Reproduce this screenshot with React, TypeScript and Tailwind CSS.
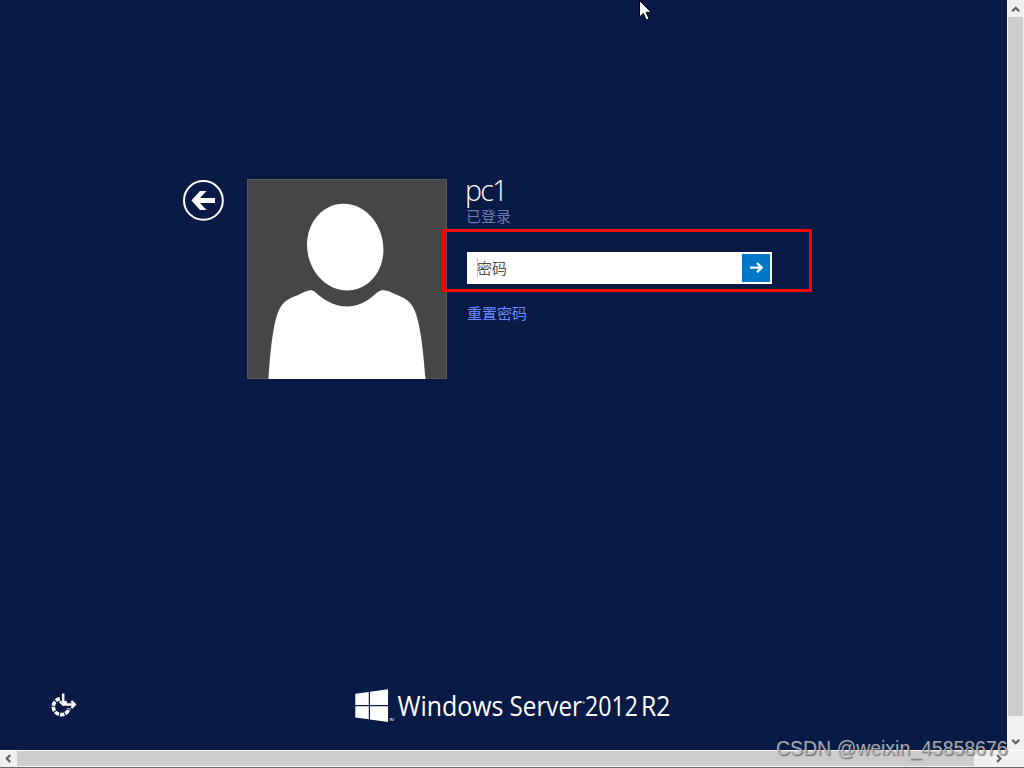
import React from 'react';

type IconProps = Readonly<{
	className?: string;
}>;

const BackIcon = ({ className }: IconProps) => (
	<svg className={className} width="42" height="42" viewBox="0 0 42 42">
		<circle
			cx="21.4"
			cy="21.4"
			r="19.4"
			fill="none"
			stroke="#fff"
			strokeWidth="2"
		/>
		<path
			d="M9.4 21.5 L18 12 H24.5 L18 19 H33 V24 H18 L24.5 31 H18 Z"
			fill="#fff"
		/>
	</svg>
);

const Avatar = () => (
	<svg
		className="block shrink-0 bg-[#464646]"
		width="200"
		height="200"
		viewBox="0 0 200 200"
	>
		<rect
			x="0.5"
			y="0.5"
			width="199"
			height="199"
			fill="none"
			stroke="#595959"
		/>
		<path
			d="M96.5 24.8 C119 24.8 136.4 46 136.4 71 C136.4 94 120 111.5 100 111.5 C78 111.5 60 90 60 66 C60 43 76 24.8 96.5 24.8 Z"
			fill="#fff"
		/>
		<path
			d="M21.5 200 C23 176 26 143 32 131 C36 122 43 119 51 116 C56 113.6 60 111.3 63.5 111.3 C67.5 111.3 68 113.5 72 116.5 C80 123 90 127.5 100 127.5 C110 127.5 119 123 126 117 C130 114 131.5 111.3 136.5 111.3 C141 111.3 144 113.5 149 115.5 C157 119 163 121 167 130 C174 145 176.5 176 178.5 200 Z"
			fill="#fff"
		/>
	</svg>
);

const SubmitIcon = () => (
	<svg width="28" height="28" viewBox="0 0 28 28">
		<path
			d="M8 13.6 H20 M15 9 L19.6 13.6 L15 18.2"
			fill="none"
			stroke="#fff"
			strokeWidth="2.3"
		/>
	</svg>
);

const EaseOfAccessIcon = () => (
	<svg width="28" height="28" viewBox="0 0 28 28">
		<path
			d="M9.8 6.8 A8 8 0 1 0 19.1 16.5"
			fill="none"
			stroke="#fff"
			strokeWidth="3.6"
			strokeDasharray="4.4 1.1"
		/>
		<path
			d="M13.2 1.4 V12 M9.8 9.4 L13.2 12.6 L16.6 9.4 M13 12.5 H24 M21.4 9 L24.8 12.5 L21.4 16"
			fill="none"
			stroke="#fff"
			strokeWidth="2.5"
		/>
	</svg>
);

const ServerLogo = () => (
	<svg
		width="320"
		height="40"
		viewBox="0 0 320 40"
		className="font-['Open_Sans',sans-serif]"
		fill="#fff"
	>
		<path d="M0.3 7.8 L13.8 5.9 V19 H0.3 Z M15 5.7 L33 3.2 V19 H15 Z M0.3 20.2 H13.8 V33.3 L0.3 31.5 Z M15 20.2 H33 V35.9 L15 33.5 Z" />
		<text x="34" y="34.5" fontSize="4" textLength="5">
			TM
		</text>
		<g fontSize="26.5">
			<text x="42.5" y="29.6" textLength="106" lengthAdjust="spacingAndGlyphs">
				Windows
			</text>
			<text x="154.5" y="29.6" textLength="72.5" lengthAdjust="spacingAndGlyphs">
				Server
			</text>
			<text x="230" y="29.6" textLength="53" lengthAdjust="spacingAndGlyphs">
				2012
			</text>
			<text x="286" y="29.6" textLength="29.5" lengthAdjust="spacingAndGlyphs">
				R2
			</text>
		</g>
		<circle cx="228.6" cy="16.5" r="1.2" opacity="0.5" />
	</svg>
);

type ChevronProps = Readonly<{
	d: string;
}>;

const Chevron = ({ d }: ChevronProps) => (
	<svg width="16" height="16" viewBox="0 0 16 16">
		<path d={d} fill="none" stroke="#606060" strokeWidth="2.2" />
	</svg>
);

const VerticalScrollbar = () => (
	<div className="flex w-[17px] flex-col border-l border-white bg-[#f0f0f0]">
		<div className="flex h-[17px] items-center">
			<Chevron d="M4.2 10.3 L7.7 6.8 L11.2 10.3" />
		</div>
		<div className="mr-px h-[699px] bg-[#cdcdcd]" />
		<div className="pt-[18px]">
			<Chevron d="M4.2 5.8 L7.7 9.3 L11.2 5.8" />
		</div>
	</div>
);

const HorizontalScrollbar = () => (
	<div className="flex h-[17px] border-t border-white bg-[#f0f0f0]">
		<div className="w-[17px]">
			<Chevron d="M10.3 4 L6.8 7.5 L10.3 11" />
		</div>
		<div className="mb-px w-[957px] bg-[#cdcdcd]" />
		<div className="pl-4">
			<Chevron d="M7 4 L10.5 7.5 L7 11" />
		</div>
	</div>
);

const SignInForm = () => (
	<div className="ml-5 w-[305px] font-['Noto_Sans_CJK_SC',sans-serif] text-[15px] leading-5">
		<h1 className="-mt-[6px] -ml-[2px] h-[33px] font-['Open_Sans',sans-serif] text-[28.5px] leading-[34px] font-light tracking-[-1.8px] text-white">
			pc1
		</h1>
		<p className="-ml-px text-[#6b7bb0]">已登录</p>
		<div className="relative mt-[26px] flex h-8 items-center bg-white p-0.5">
			<div className="ml-2 h-5 w-px bg-[#c4c4c4]" />
			<span className="-ml-px flex-1 text-[#505050]">密码</span>
			<button className="h-7 w-7 bg-[#0078c8]">
				<SubmitIcon />
			</button>
			<div className="absolute -top-[23px] -left-[25px] h-[63px] w-[370px] border-3 border-[#ff0000]" />
		</div>
		<a className="mt-[19px] block text-[#668cff]">重置密码</a>
	</div>
);

const MouseCursor = () => (
	<svg
		className="absolute top-0 left-[639px]"
		width="14"
		height="22"
		viewBox="0 0 14 22"
	>
		<path
			d="M0.5 0.5 V17 L4.3 13.4 L7.2 20 L10 18.8 L7.2 12.3 H12.2 Z"
			fill="#fff"
			stroke="#000"
		/>
	</svg>
);

const App = () => (
	<div className="relative flex h-[768px] w-[1024px] flex-col overflow-hidden bg-[#081a45]">
		<div className="flex h-[750px]">
			<main className="flex flex-1 flex-col justify-between">
				<div className="flex pt-[179px] pl-[182px]">
					<BackIcon className="mr-[23px]" />
					<Avatar />
					<SignInForm />
				</div>
				<footer className="flex items-center pb-6 pl-[50px]">
					<EaseOfAccessIcon />
					<div className="ml-[277px]">
						<ServerLogo />
					</div>
				</footer>
			</main>
			<VerticalScrollbar />
		</div>
		<HorizontalScrollbar />
		<div className="h-px bg-[#696969]" />
		<MouseCursor />
		<span className="absolute top-[736px] left-[776px] font-['Liberation_Sans',sans-serif] text-[19.45px] leading-6 whitespace-nowrap text-[#b9bbc0]/90 [text-shadow:1px_1px_1px_rgba(60,60,60,0.7)]">
			CSDN @weixin_45858676
		</span>
	</div>
);

export default App;
